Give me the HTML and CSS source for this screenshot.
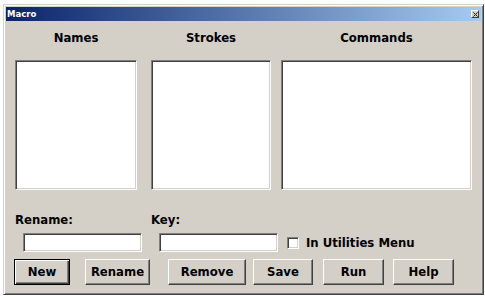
FILE: index.html
```html
<!DOCTYPE html>
<html lang="en">
  <head>
    <meta charset="UTF-8" />
    <title>Macro</title>
    <link rel="stylesheet" href="styles.css">
  </head>
  <body>
    <div class="window">
      <div class="titlebar">
        <span class="title">Macro</span>
        <span class="closeBtn">
          <svg width="6" height="6" viewBox="0 0 6 6"><path d="M0.5 0.5L5.5 5.5M5.5 0.5L0.5 5.5" stroke="#222" stroke-width="1.2"/></svg>
        </span>
      </div>
      <main class="content">
        <div class="columns">
          <div class="col colNames">
            <div class="colLabel">Names</div>
            <div class="listBox"></div>
          </div>
          <div class="col colStrokes">
            <div class="colLabel">Strokes</div>
            <div class="listBox"></div>
          </div>
          <div class="col colCommands">
            <div class="colLabel">Commands</div>
            <div class="listBox"></div>
          </div>
        </div>

        <div class="fieldLabels">
          <label class="renameLabel" for="renameField">Rename:</label>
          <label for="keyField">Key:</label>
        </div>
        <div class="fields">
          <input type="text" id="renameField" class="textField renameField">
          <input type="text" id="keyField" class="textField keyField">
          <span class="checkBox"></span>
          <span class="checkLabel">In Utilities Menu</span>
        </div>

        <div class="buttons">
          <button class="btn btnDefault btnNew">New</button>
          <button class="btn btnRename">Rename</button>
          <button class="btn btnRemove">Remove</button>
          <button class="btn btnSave">Save</button>
          <button class="btn btnRun">Run</button>
          <button class="btn btnHelp">Help</button>
        </div>
      </main>
    </div>
  </body>
</html>
```

FILE: styles.css
```css
body {
  margin: 0;
  background-color: #fff;
  font-family: "DejaVu Sans", Verdana, sans-serif;
  font-size: 11.7px;
  font-weight: bold;
  color: #000;
}

.window {
  box-sizing: border-box;
  width: 481px;
  height: 291px;
  margin: 4px 0 0 3px;
  padding: 2px;
  background-color: #d4d0c8;
  border: 1px solid;
  border-color: #d4d0c8 #404040 #404040 #d4d0c8;
  box-shadow: inset 1px 1px #fff, inset -1px -1px #808080;
}

.titlebar {
  height: 14px;
  display: flex;
  align-items: center;
  justify-content: space-between;
  background: linear-gradient(to right, #0a246a, #a6caf0);
  padding: 0 2px 0 1px;
}
.title {
  color: #fff;
  font-size: 8.5px;
  line-height: 14px;
}
.closeBtn {
  box-sizing: border-box;
  width: 8px;
  height: 8px;
  display: flex;
  align-items: center;
  justify-content: center;
  background-color: #d4d0c8;
  border: 1px solid;
  border-color: #fff #404040 #404040 #fff;
}
.closeBtn svg {
  display: block;
  width: 5px;
  height: 5px;
}

.content {
  padding-left: 9px;
}

.columns {
  display: flex;
}
.colNames {
  width: 122px;
}
.colStrokes {
  width: 120px;
  margin-left: 14px;
}
.colCommands {
  width: 191px;
  margin-left: 10px;
}
.colLabel {
  margin-top: 10px;
  line-height: 14px;
  text-align: center;
}
.listBox {
  box-sizing: border-box;
  height: 130px;
  margin-top: 15px;
  background-color: #fff;
  border: 1px solid;
  border-color: #808080 #fff #fff #808080;
  box-shadow: inset 1px 1px #404040, inset -1px -1px #d4d0c8;
}

.fieldLabels {
  display: flex;
  margin-top: 23px;
  line-height: 14px;
}
.renameLabel {
  width: 136px;
}

.fields {
  display: flex;
  align-items: center;
  margin-top: 6px;
  height: 19px;
}
.textField {
  box-sizing: border-box;
  width: 119px;
  height: 19px;
  margin: 0;
  padding: 0;
  background-color: #fff;
  border: 1px solid;
  border-color: #808080 #fff #fff #808080;
  box-shadow: inset 1px 1px #404040, inset -1px -1px #d4d0c8;
  outline: none;
}
.renameField {
  margin-left: 8px;
}
.keyField {
  margin-left: 17px;
}
.checkBox {
  box-sizing: border-box;
  width: 12px;
  height: 12px;
  margin-left: 9px;
  background-color: #fff;
  border: 1px solid;
  border-color: #808080 #fff #fff #808080;
  box-shadow: inset 1px 1px #404040, inset -1px -1px #d4d0c8;
}
.checkLabel {
  margin-left: 7px;
}

.buttons {
  display: flex;
  margin-top: 7px;
}
.btn {
  box-sizing: border-box;
  height: 26px;
  padding: 0;
  font-family: inherit;
  font-size: inherit;
  font-weight: bold;
  color: #000;
  background-color: #d4d0c8;
  border: 1px solid;
  border-color: #fff #404040 #404040 #fff;
  box-shadow: inset -1px -1px #808080;
}
.btnDefault {
  border-color: #000;
  box-shadow: inset 1px 1px #fff, inset -1px -1px #404040, inset -2px -2px #808080;
}
.btnNew {
  width: 56px;
  margin-left: -1px;
}
.btnRename {
  width: 65px;
  margin-left: 15px;
}
.btnRemove {
  width: 78px;
  margin-left: 18px;
}
.btnSave {
  width: 60px;
  margin-left: 7px;
}
.btnRun {
  width: 61px;
  margin-left: 10px;
}
.btnHelp {
  width: 61px;
  margin-left: 9px;
}
```
